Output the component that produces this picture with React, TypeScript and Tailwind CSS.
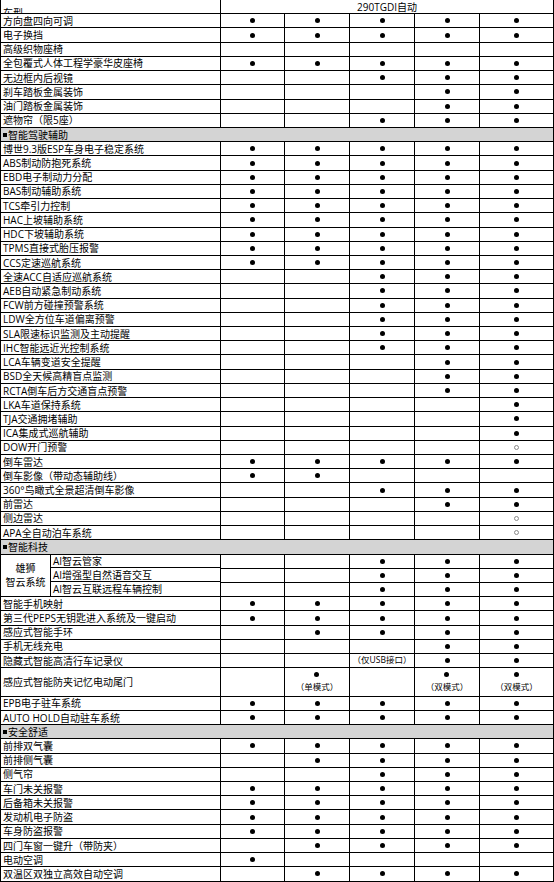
import React from "react";

type Mark = 0 | 1 | 2 | string | { dot: true; note: string };

type Row =
  | { kind: "row"; label: string; marks: Mark[]; tall?: boolean }
  | { kind: "section"; label: string }
  | { kind: "group"; title: string[]; items: { label: string; marks: Mark[] }[] };

const ALL: Mark[] = [1, 1, 1, 1, 1];

const rows: Row[] = [
  { kind: "row", label: "方向盘四向可调", marks: ALL },
  { kind: "row", label: "电子换挡", marks: ALL },
  { kind: "row", label: "高级织物座椅", marks: [0, 0, 0, 0, 0] },
  { kind: "row", label: "全包覆式人体工程学豪华皮座椅", marks: ALL },
  { kind: "row", label: "无边框内后视镜", marks: [0, 0, 1, 1, 1] },
  { kind: "row", label: "刹车踏板金属装饰", marks: [0, 0, 0, 1, 1] },
  { kind: "row", label: "油门踏板金属装饰", marks: [0, 0, 0, 1, 1] },
  { kind: "row", label: "遮物帘（限5座）", marks: [0, 0, 1, 1, 1] },
  { kind: "section", label: "智能驾驶辅助" },
  { kind: "row", label: "博世9.3版ESP车身电子稳定系统", marks: ALL },
  { kind: "row", label: "ABS制动防抱死系统", marks: ALL },
  { kind: "row", label: "EBD电子制动力分配", marks: ALL },
  { kind: "row", label: "BAS制动辅助系统", marks: ALL },
  { kind: "row", label: "TCS牵引力控制", marks: ALL },
  { kind: "row", label: "HAC上坡辅助系统", marks: ALL },
  { kind: "row", label: "HDC下坡辅助系统", marks: ALL },
  { kind: "row", label: "TPMS直接式胎压报警", marks: ALL },
  { kind: "row", label: "CCS定速巡航系统", marks: ALL },
  { kind: "row", label: "全速ACC自适应巡航系统", marks: [0, 0, 1, 1, 1] },
  { kind: "row", label: "AEB自动紧急制动系统", marks: [0, 0, 1, 1, 1] },
  { kind: "row", label: "FCW前方碰撞预警系统", marks: [0, 0, 1, 1, 1] },
  { kind: "row", label: "LDW全方位车道偏离预警", marks: [0, 0, 1, 1, 1] },
  { kind: "row", label: "SLA限速标识监测及主动提醒", marks: [0, 0, 1, 1, 1] },
  { kind: "row", label: "IHC智能远近光控制系统", marks: [0, 0, 1, 1, 1] },
  { kind: "row", label: "LCA车辆变道安全提醒", marks: [0, 0, 0, 1, 1] },
  { kind: "row", label: "BSD全天候高精盲点监测", marks: [0, 0, 0, 1, 1] },
  { kind: "row", label: "RCTA倒车后方交通盲点预警", marks: [0, 0, 0, 1, 1] },
  { kind: "row", label: "LKA车道保持系统", marks: [0, 0, 0, 0, 1] },
  { kind: "row", label: "TJA交通拥堵辅助", marks: [0, 0, 0, 0, 1] },
  { kind: "row", label: "ICA集成式巡航辅助", marks: [0, 0, 0, 0, 1] },
  { kind: "row", label: "DOW开门预警", marks: [0, 0, 0, 0, 2] },
  { kind: "row", label: "倒车雷达", marks: ALL },
  { kind: "row", label: "倒车影像（带动态辅助线）", marks: [1, 1, 0, 0, 0] },
  { kind: "row", label: "360°鸟瞰式全景超清倒车影像", marks: [0, 0, 1, 1, 1] },
  { kind: "row", label: "前雷达", marks: [0, 0, 0, 1, 1] },
  { kind: "row", label: "侧边雷达", marks: [0, 0, 0, 0, 2] },
  { kind: "row", label: "APA全自动泊车系统", marks: [0, 0, 0, 0, 2] },
  { kind: "section", label: "智能科技" },
  {
    kind: "group",
    title: ["雄狮", "智云系统"],
    items: [
      { label: "AI智云管家", marks: [0, 0, 1, 1, 1] },
      { label: "AI增强型自然语音交互", marks: [0, 0, 1, 1, 1] },
      { label: "AI智云互联远程车辆控制", marks: [0, 0, 1, 1, 1] },
    ],
  },
  { kind: "row", label: "智能手机映射", marks: ALL },
  { kind: "row", label: "第三代PEPS无钥匙进入系统及一键启动", marks: ALL },
  { kind: "row", label: "感应式智能手环", marks: [0, 1, 1, 1, 1] },
  { kind: "row", label: "手机无线充电", marks: [0, 0, 0, 1, 1] },
  { kind: "row", label: "隐藏式智能高清行车记录仪", marks: [0, 0, "（仅USB接口）", 1, 1] },
  {
    kind: "row",
    label: "感应式智能防夹记忆电动尾门",
    tall: true,
    marks: [
      0,
      { dot: true, note: "（单模式）" },
      0,
      { dot: true, note: "（双模式）" },
      { dot: true, note: "（双模式）" },
    ],
  },
  { kind: "row", label: "EPB电子驻车系统", marks: ALL },
  { kind: "row", label: "AUTO HOLD自动驻车系统", marks: ALL },
  { kind: "section", label: "安全舒适" },
  { kind: "row", label: "前排双气囊", marks: ALL },
  { kind: "row", label: "前排侧气囊", marks: [0, 1, 1, 1, 1] },
  { kind: "row", label: "侧气帘", marks: [0, 0, 1, 1, 1] },
  { kind: "row", label: "车门未关报警", marks: ALL },
  { kind: "row", label: "后备箱未关报警", marks: ALL },
  { kind: "row", label: "发动机电子防盗", marks: ALL },
  { kind: "row", label: "车身防盗报警", marks: ALL },
  { kind: "row", label: "四门车窗一键升（带防夹）", marks: [0, 1, 1, 1, 1] },
  { kind: "row", label: "电动空调", marks: [1, 0, 0, 0, 0] },
  { kind: "row", label: "双温区双独立高效自动空调", marks: [0, 1, 1, 1, 1] },
];

const Dot = () => <span className="block h-[5px] w-[5px] rounded-full bg-black" />;

const Ring = () => (
  <span className="block h-[5px] w-[5px] rounded-full border border-[#8a8a8a]" />
);

const MarkCell = ({ mark, tall }: { mark: Mark; tall?: boolean }) => {
  let content: React.ReactNode = null;
  if (mark === 1) content = <Dot />;
  else if (mark === 2) content = <Ring />;
  else if (typeof mark === "string")
    content = <span className="whitespace-nowrap text-[8.5px] leading-none">{mark}</span>;
  else if (typeof mark === "object")
    content = (
      <div className="flex flex-col items-center gap-[6px]">
        <Dot />
        <span className="whitespace-nowrap text-[8.5px] leading-none">{mark.note}</span>
      </div>
    );

  return (
    <div
      className={`flex items-center justify-center border-r border-b border-black ${
        tall ? "row-span-2" : ""
      }`}
    >
      {content}
    </div>
  );
};

const LabelCell = ({ label, tall }: { label: string; tall?: boolean }) => (
  <div
    className={`flex items-center overflow-hidden whitespace-nowrap border-r border-b border-black pl-[2px] leading-none ${
      tall ? "row-span-2" : ""
    }`}
  >
    {label}
  </div>
);

export default function App() {
  return (
    <div className="h-[882px] w-[554px] overflow-hidden bg-white">
      <div className="grid w-[554px] auto-rows-[14.22px] grid-cols-[220px_64px_65px_65px_65px_74px] border-l border-black font-['Open_Sans','Noto_Sans_CJK_SC',sans-serif] text-[10px] text-black">
        {/* header */}
        <div className="overflow-hidden border-r border-b border-black pl-[2px]">
          <div className="pt-[8px] leading-none">车型</div>
        </div>
        <div className="col-span-5 flex justify-center border-r border-b border-black pt-[2px] leading-none">
          290TGDI自动
        </div>

        {rows.map((row, i) => {
          if (row.kind === "section") {
            return (
              <div
                key={i}
                className="col-span-6 flex items-center border-r border-b border-black bg-[#d4d4d4] pl-[2px] leading-none"
              >
                <span className="mr-[1px] inline-block h-[4px] w-[4px] bg-black" />
                {row.label}
              </div>
            );
          }
          if (row.kind === "group") {
            return (
              <React.Fragment key={i}>
                {row.items.map((item, j) => (
                  <React.Fragment key={j}>
                    {j === 0 ? (
                      <div className="row-span-3 flex border-r border-b border-black">
                        <div className="flex w-[50px] flex-col items-center justify-center gap-[4px] border-r border-black leading-none">
                          {row.title.map((t) => (
                            <span key={t}>{t}</span>
                          ))}
                        </div>
                        <div className="grid flex-1 grid-rows-3">
                          {row.items.map((it, k) => (
                            <div
                              key={k}
                              className={`flex items-center whitespace-nowrap pl-[2px] leading-none ${
                                k < 2 ? "border-b border-black" : ""
                              }`}
                            >
                              {it.label}
                            </div>
                          ))}
                        </div>
                      </div>
                    ) : null}
                    {item.marks.map((m, k) => (
                      <MarkCell key={k} mark={m} />
                    ))}
                  </React.Fragment>
                ))}
              </React.Fragment>
            );
          }
          return (
            <React.Fragment key={i}>
              <LabelCell label={row.label} tall={row.tall} />
              {row.marks.map((m, k) => (
                <MarkCell key={k} mark={m} tall={row.tall} />
              ))}
            </React.Fragment>
          );
        })}
      </div>
    </div>
  );
}
